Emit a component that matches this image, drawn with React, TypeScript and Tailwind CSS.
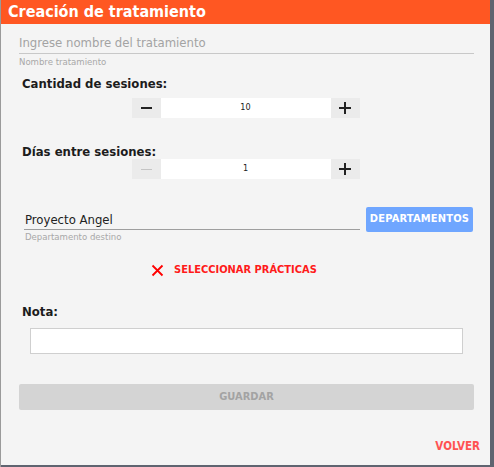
import React from 'react';

const font = { fontFamily: '"DejaVu Sans Condensed", "DejaVu Sans", Verdana, sans-serif' };

const Stepper = ({ value, minusDisabled }: { value: string; minusDisabled?: boolean }) => (
  <div className="flex h-[20px] w-[228px] mx-auto">
    <button className="w-[29px] h-full bg-[#ebebeb] flex items-center justify-center">
      <span className={`block w-[11px] ${minusDisabled ? 'bg-[#c4c4c4] h-[1px]' : 'bg-[#222] h-[2px]'}`} />
    </button>
    <div className="flex-1 h-full bg-white flex items-center justify-center text-[9px] text-[#222]">{value}</div>
    <button className="w-[29px] h-full bg-[#ebebeb] flex items-center justify-center relative">
      <span className="block w-[12px] h-[2px] bg-[#222]" />
      <span className="absolute block w-[2px] h-[12px] bg-[#222]" />
    </button>
  </div>
);

export default function App() {
  return (
    <div className="w-[494px] h-[467px] bg-[#5f6470] flex overflow-hidden" style={font}>
      <div className="w-[1px] bg-[#9a9a9a]" />
      <div className="w-[489px] h-[465px] bg-[#f4f4f4] flex flex-col">
        <div className="h-[24px] bg-[#ff5722] pl-[7px] flex items-center text-white font-bold text-[16px]">
          Creación de tratamiento
        </div>

        {/* nombre */}
        <div className="ml-[18px] w-[455px] mt-[10px]">
          <div className="h-[20px] border-b border-[#c8c8c8] text-[13px] text-[#a3a3a3] leading-[18px]">
            Ingrese nombre del tratamiento
          </div>
          <div className="text-[9.5px] text-[#a8a8a8] mt-[2px] leading-[12px]">Nombre tratamiento</div>
        </div>

        <div className="ml-[21px] mt-[7px] font-bold text-[13px] text-[#1c1c1c] leading-[18px]">Cantidad de sesiones:</div>
        <div className="mt-[5px]">
          <Stepper value="10" />
        </div>

        <div className="ml-[21px] mt-[25px] font-bold text-[13px] text-[#1c1c1c] leading-[18px]">Días entre sesiones:</div>
        <div className="mt-[-2px]">
          <Stepper value="1" minusDisabled />
        </div>

        {/* departamento */}
        <div className="flex mt-[30px] pl-[23px] pr-[16px] items-start">
          <div className="w-[336px]">
            <div className="h-[21px] border-b border-[#9e9e9e] text-[13px] text-[#222] leading-[20px] pl-[1px] pt-[1px]">
              Proyecto Angel
            </div>
            <div className="text-[9.5px] text-[#a8a8a8] mt-[1px] leading-[12px] pl-[1px]">Departamento destino</div>
          </div>
          <button className="ml-[6px] mt-[-2px] w-[107px] h-[25px] bg-[#6fa6ff] rounded-[2px] text-white font-bold text-[11px] tracking-[0.2px]">
            DEPARTAMENTOS
          </button>
        </div>

        <div className="flex items-center mt-[20px] ml-[150px] h-[14px]">
          <svg width="13" height="13" viewBox="0 0 13 13">
            <path d="M1.5 1.5 L11.5 11.5 M11.5 1.5 L1.5 11.5" stroke="#ff0000" strokeWidth="1.8" />
          </svg>
          <span className="ml-[10px] text-[#ff1a1a] font-bold text-[11px]">SELECCIONAR PRÁCTICAS</span>
        </div>

        <div className="ml-[21px] mt-[26px] font-bold text-[13px] text-[#1c1c1c] leading-[18px]">Nota:</div>
        <div className="ml-[29px] mt-[7px] w-[433px] h-[26px] bg-white border border-[#cfcfcf]" />

        <button className="ml-[18px] mt-[30px] w-[455px] h-[26px] bg-[#d4d4d4] rounded-[2px] text-[#a3a3a3] font-bold text-[11px]">
          GUARDAR
        </button>

        <div className="flex justify-end mt-[29px] pr-[10px]">
          <span className="text-[#ff5252] font-bold text-[11.5px] leading-[14px]">VOLVER</span>
        </div>
      </div>
    </div>
  );
}
